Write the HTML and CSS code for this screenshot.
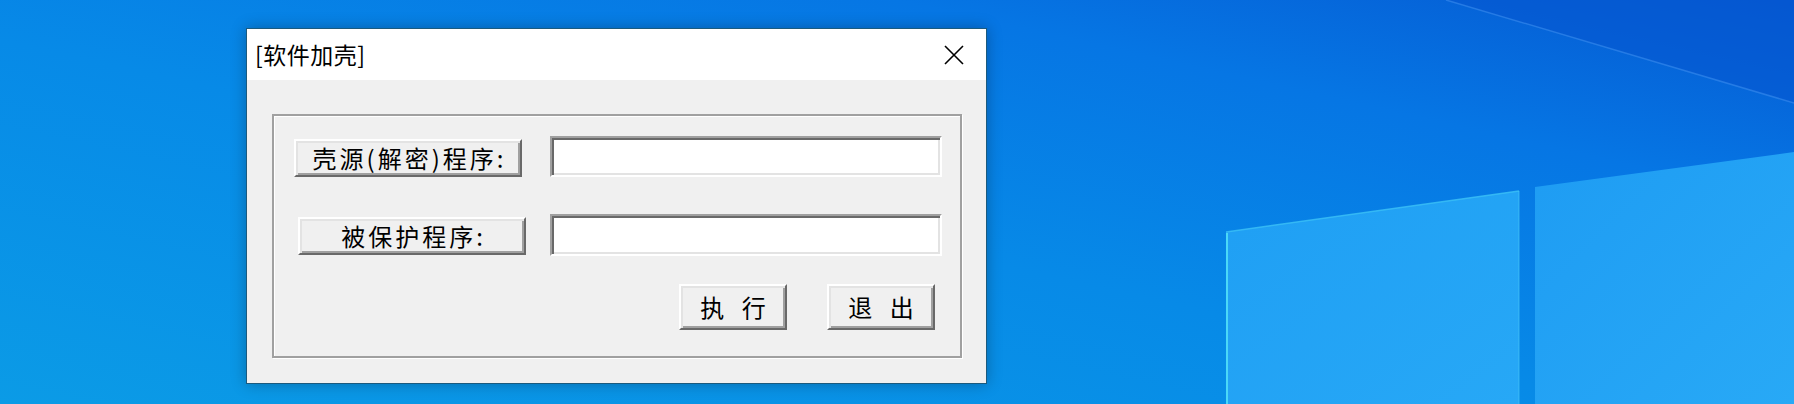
FILE: index.html
```html
<!DOCTYPE html>
<html lang="zh-CN">
<head>
<meta charset="utf-8">
<title>[软件加壳]</title>
<link rel="stylesheet" href="styles.css">
</head>
<body>
<div class="desktop">
  <svg class="wall" width="1794" height="404" viewBox="0 0 1794 404" aria-hidden="true">
    <defs>
      <linearGradient id="bg" x1="0" y1="1" x2="1" y2="0">
        <stop offset="0" stop-color="#0b9be6"/>
        <stop offset="0.45" stop-color="#078ae7"/>
        <stop offset="0.75" stop-color="#0676e4"/>
        <stop offset="1" stop-color="#0559d2"/>
      </linearGradient>
      <linearGradient id="paneL" x1="0" y1="0" x2="1" y2="1">
        <stop offset="0" stop-color="#1f9ff4"/>
        <stop offset="1" stop-color="#27a8f6"/>
      </linearGradient>
      <linearGradient id="paneR" x1="0" y1="0" x2="1" y2="1">
        <stop offset="0" stop-color="#1e9cf3"/>
        <stop offset="1" stop-color="#28a9f6"/>
      </linearGradient>
    </defs>
    <rect x="0" y="0" width="1794" height="404" fill="url(#bg)"/>
    <polygon points="1446,0 1794,0 1794,103" fill="#0556cf" opacity="0.55"/>
    <line x1="1446" y1="0" x2="1794" y2="103" stroke="#3b8def" stroke-width="1.5" opacity="0.6"/>
    <polygon points="1226,232 1519,191 1519,404 1226,404" fill="url(#paneL)"/>
    <polygon points="1535,187 1794,152 1794,404 1535,404" fill="url(#paneR)"/>
    <line x1="1227" y1="233" x2="1227" y2="404" stroke="#4ad8f8" stroke-width="2"/>
    <line x1="1226" y1="232" x2="1519" y2="191" stroke="#3cc2f7" stroke-width="1.5" opacity="0.8"/>
    <line x1="1519" y1="191" x2="1519" y2="404" stroke="#4fcdf7" stroke-width="1" opacity="0.6"/>
  </svg>

  <div class="window">
    <div class="titlebar">
      <span class="title">[软件加壳]</span>
      <svg class="close" width="20" height="20" viewBox="0 0 20 20" aria-hidden="true">
        <path d="M1 1 L19 19 M19 1 L1 19" stroke="#000" stroke-width="1.6" fill="none"/>
      </svg>
    </div>
    <div class="client">
      <div class="group">
        <div class="row">
          <div class="btn label-btn">壳源(解密)程序:</div>
          <div class="field"></div>
        </div>
        <div class="row row2">
          <div class="btn label-btn label-btn2">被保护程序:</div>
          <div class="field field2"></div>
        </div>
        <div class="actions">
          <div class="btn act">执 行</div>
          <div class="btn act">退 出</div>
        </div>
      </div>
    </div>
  </div>
</div>
</body>
</html>
```

FILE: styles.css
```css
html, body {
  margin: 0;
  padding: 0;
}
body {
  width: 1794px;
  height: 404px;
  overflow: hidden;
  font-family: "Noto Sans CJK SC", "Noto Sans", sans-serif;
}
.desktop {
  position: relative;
  width: 1794px;
  height: 404px;
  overflow: hidden;
}
.wall {
  position: absolute;
  left: 0;
  top: 0;
  display: block;
}
.window {
  position: absolute;
  left: 246px;
  top: 28px;
  width: 739px;
  height: 354px;
  border: 1px solid #1b5a7e;
  background: #f0f0f0;
  box-shadow: 0 0 14px rgba(0, 0, 0, 0.28);
  display: flex;
  flex-direction: column;
}
.titlebar {
  height: 51px;
  background: #ffffff;
  display: flex;
  align-items: center;
  justify-content: space-between;
  padding: 0 22px 0 8px;
}
.title {
  font-size: 23px;
  letter-spacing: 0.5px;
  color: #000;
  line-height: 1;
}
.close {
  display: block;
}
.client {
  flex: 1;
  display: flex;
  padding: 34px 24px 25px 25px;
}
.group {
  flex: 1;
  border: 2px solid #a0a0a0;
  box-shadow: 1px 1px 0 #ffffff, inset 1px 1px 0 #ffffff;
  padding: 20px 17px 0 20px;
  display: flex;
  flex-direction: column;
}
.row {
  display: flex;
  align-items: flex-start;
}
.row2 {
  margin-top: 37px;
}
.btn {
  box-sizing: border-box;
  background: #f0f0f0;
  border-style: solid;
  border-width: 2px;
  border-color: #ffffff #696969 #696969 #ffffff;
  box-shadow: inset 2px 2px 0 #e3e3e3, inset -2px -2px 0 #a0a0a0;
  display: flex;
  align-items: center;
  justify-content: center;
  font-size: 24px;
  letter-spacing: 2px;
  color: #000;
  white-space: pre;
  line-height: 1;
}
.label-btn {
  width: 228px;
  height: 38px;
  margin-top: 3px;
  padding-left: 3px;
  letter-spacing: 3px;
}
.label-btn2 {
  margin-left: 4px;
}
.field {
  box-sizing: border-box;
  width: 392px;
  height: 41px;
  margin-left: 28px;
  background: #ffffff;
  border-style: solid;
  border-width: 2px;
  border-color: #a0a0a0 #ffffff #ffffff #a0a0a0;
  box-shadow: inset 2px 2px 0 #696969, inset -2px -2px 0 #e3e3e3;
}
.field2 {
  height: 42px;
  margin-left: 24px;
}
.actions {
  display: flex;
  justify-content: flex-end;
  gap: 40px;
  margin-top: 28px;
  margin-right: 8px;
}
.act {
  width: 108px;
  height: 46px;
  word-spacing: 8px;
  padding-left: 2px;
}
```
